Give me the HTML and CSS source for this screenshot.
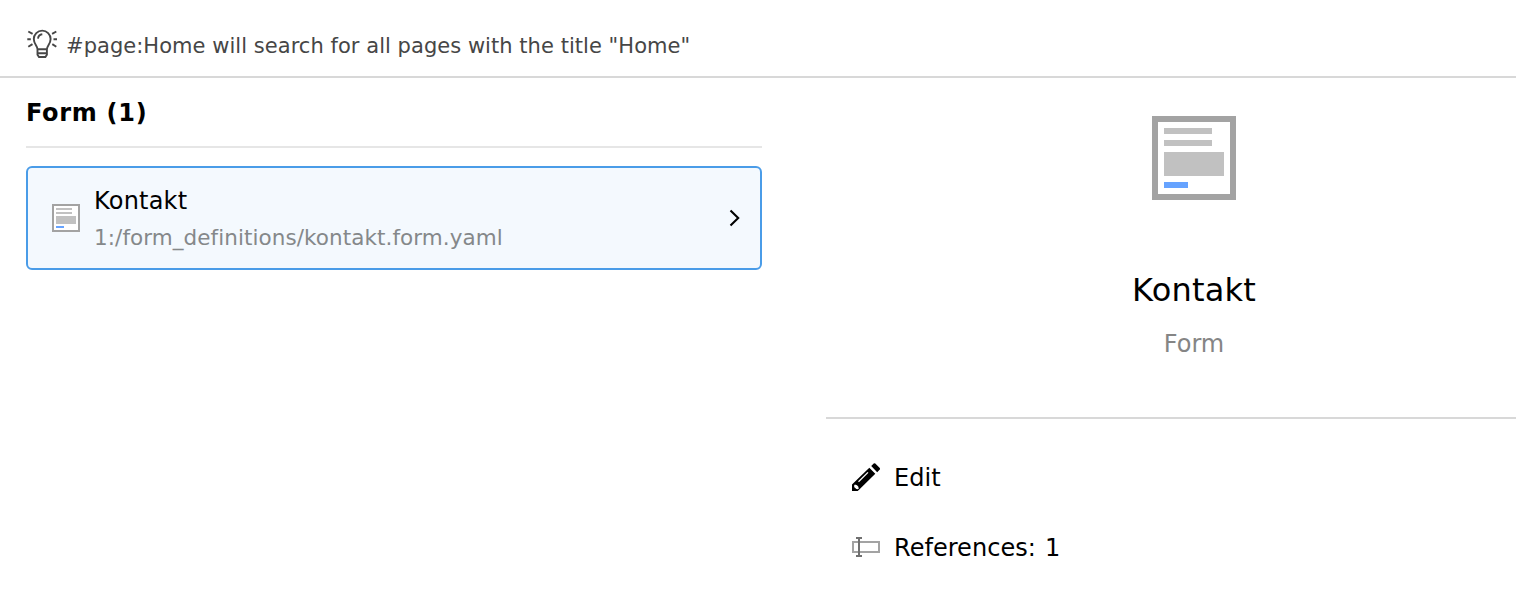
FILE: index.html
```html
<!DOCTYPE html>
<html lang="en">
<head>
<meta charset="utf-8">
<title>Search</title>
<link rel="stylesheet" href="styles.css">
</head>
<body>
<svg width="0" height="0" class="defs">
  <symbol id="form" viewBox="0 0 14 14" shape-rendering="crispEdges">
    <path fill="#a3a3a3" d="M0 0h14v14H0z"/><path fill="#fff" d="M1 1h12v12H1z"/>
    <path fill="#c1c1c1" d="M2 2h8v1H2zM2 4h8v1H2zM2 6h10v4H2z"/><path fill="#66a3ff" d="M2 11h4v1H2z"/>
  </symbol>
</svg>
<header class="hint">
  <svg class="bulb" viewBox="0 0 32 32" fill="none" stroke="#464646" stroke-width="1.9">
    <path d="M10.500 20.200c0-3.400-3.700-5-3.700-10.200a8.400 8.400 0 0 1 16.800 0c0 5.200-3.700 6.800-3.700 10.200v5.600l-1.500 2.200h-6.400l-1.500-2.200zM10.500 20.300h9.400M10.500 24.300h9.400"/>
    <path d="M11 9.600a5 5 0 0 1 4.300-4.300M1.300 2.500l4.300 2.400M.3 10.300h3.500M1.300 17.700l4.200-2.600M29.300 2.500l-4.200 2.400M30 10.300h-3.500M29.300 17.700l-4-2.600"/>
  </svg>
  <span class="hint-text">#page:Home will search for all pages with the title "Home"</span>
</header>
<main class="content">
  <section class="results">
    <h2 class="group">Form (1)</h2>
    <div class="item">
      <svg class="item-icon"><use href="#form"/></svg>
      <div class="item-text">
        <div class="item-title">Kontakt</div>
        <div class="item-path">1:/form_definitions/kontakt.form.yaml</div>
      </div>
      <svg class="chevron" viewBox="0 0 12 18" fill="none" stroke="#000" stroke-width="2.100"><path d="M1.500 1.500L9.200 9l-7.700 7.500"/></svg>
    </div>
  </section>
  <aside class="preview">
    <div class="summary">
      <svg class="preview-icon"><use href="#form"/></svg>
      <h1 class="title">Kontakt</h1>
      <div class="type">Form</div>
    </div>
    <div class="actions">
      <div class="action">
        <svg class="action-icon" viewBox="0 0 28 28">
          <path d="M17.300 4.800l6 6L7.300 26.400 5.700 28H0v-6.500z"/><path d="M19.200 3.100L21.700.6q.8-.8 1.600 0l4.500 4.500q.6.7 0 1.400l-2.600 2.700z"/>
          <path d="M2.100 22.400l.8-.8 2.100.7 1.200 1.200.6 1.900-.9.900-1.500-.2-2.100-1.800z" fill="#fff"/>
          <path d="M6.500 18.800L16 9.400" stroke="#fff" stroke-width="1.300"/>
        </svg>
        <span class="action-label">Edit</span>
      </div>
      <div class="action">
        <svg class="action-icon" viewBox="0 0 28 28" shape-rendering="crispEdges">
          <path d="M1 9h26v10H1z" fill="#fff" stroke="#a3a3a3" stroke-width="2"/>
          <path d="M4 4h6v2H8v16h2v2H4v-2h2V6H4z" fill="#707070"/>
        </svg>
        <span class="action-label">References: 1</span>
      </div>
    </div>
  </aside>
</main>
</body>
</html>
```
FILE: styles.css
```css
* { box-sizing: border-box; }
body { margin: 0; height: 590px; overflow: hidden; background: #fff; color: #000; font: 24px/30px Verdana, "DejaVu Sans", sans-serif; }
svg { display: block; flex: none; }
.defs { position: absolute; }
.hint { display: flex; height: 78px; padding: 29px 27px 0; border-bottom: 2px solid #d8d8d8; color: #464646; font-size: 21px; line-height: 34px; letter-spacing: .04px; white-space: nowrap; }
.bulb { width: 32px; height: 32px; margin-right: 7px; }
.content { display: flex; gap: 64px; padding-left: 26px; }
.results { flex: none; width: 736px; }
.group { margin: 0 0 18px; height: 70px; padding-top: 20px; border-bottom: 2px solid #e6e6e6; font-size: 24px; line-height: 30px; font-weight: bold; letter-spacing: .7px; }
.item { display: flex; align-items: center; height: 104px; padding: 0 19px 0 24px; border: 2px solid #4a9ce8; border-radius: 6px; background: #f4f9fe; }
.item-icon { width: 28px; height: 28px; }
.item-text { flex: 1; margin-left: 14px; }
.item-title { height: 37px; line-height: 34px; letter-spacing: .2px; }
.item-path { font-size: 21.5px; line-height: 34px; margin-bottom: -2px; letter-spacing: .07px; color: #85888a; }
.chevron { width: 12px; height: 18px; }
.preview { flex: none; width: 736px; }
.summary { display: flex; flex-direction: column; align-items: center; height: 341px; padding-top: 38px; border-bottom: 2px solid #d8d8d8; }
.preview-icon { width: 84px; height: 84px; }
.title { margin: 70px 0 0; font-size: 32px; line-height: 40px; font-weight: normal; letter-spacing: .2px; }
.type { margin-top: 19px; color: #858585; }
.actions { display: flex; flex-direction: column; gap: 40px; padding: 43px 26px 0; }
.action { display: flex; align-items: center; gap: 14px; height: 30px; }
.action-label { padding-top: 2px; letter-spacing: .04px; word-spacing: 1.5px; }
.action-icon { width: 28px; height: 28px; }
```
